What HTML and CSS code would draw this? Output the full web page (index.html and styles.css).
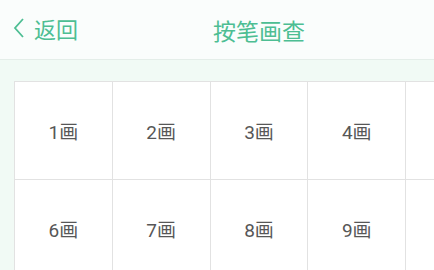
FILE: index.html
```html
<!DOCTYPE html>
<html lang="zh">
<head>
    <meta charset="UTF-8">
    <title>按笔画查</title>
    <link rel="stylesheet" href="styles.css">
</head>
<body>
    <div class="page">
        <header class="topbar">
            <a class="back" href="#">
                <svg class="chevron" width="12" height="20" viewBox="0 0 12 20">
                    <path d="M10 1 L2 10 L10 19" fill="none" stroke="#4dbe93" stroke-width="1.8"/>
                </svg>
                <span>返回</span>
            </a>
            <h1>按笔画查</h1>
        </header>

        <div class="content">
            <div class="grid">
                <div class="cell">1画</div>
                <div class="cell">2画</div>
                <div class="cell">3画</div>
                <div class="cell">4画</div>
                <div class="cell"></div>
                <div class="cell">6画</div>
                <div class="cell">7画</div>
                <div class="cell">8画</div>
                <div class="cell">9画</div>
                <div class="cell"></div>
            </div>
        </div>
    </div>
</body>
</html>
```

FILE: styles.css
```css
body {
    margin: 0;
    padding: 0;
    overflow: hidden;
    background-color: #f1faf5;
    font-family: Roboto, "Noto Sans CJK SC", sans-serif;
}
.page {
    width: 518px;
}
.topbar {
    position: relative;
    height: 59px;
    background-color: #fafdfc;
    border-bottom: 1px solid #e4eee9;
    display: flex;
    align-items: center;
    justify-content: center;
}
.topbar h1 {
    margin: 0;
    font-size: 23px;
    font-weight: normal;
    color: #4dbe93;
}
.back {
    position: absolute;
    left: 13px;
    top: 0;
    height: 56px;
    display: flex;
    align-items: center;
    gap: 9px;
    text-decoration: none;
    color: #4dbe93;
    font-size: 22px;
}
.content {
    padding: 21px 14px 0;
}
.grid {
    display: grid;
    grid-template-columns: repeat(5, 1fr);
    background-color: #fff;
    border-top: 1px solid #e2e2e2;
    border-left: 1px solid #e2e2e2;
}
.cell {
    height: 97px;
    display: flex;
    align-items: center;
    justify-content: center;
    border-right: 1px solid #e2e2e2;
    border-bottom: 1px solid #e2e2e2;
    font-size: 19px;
    color: #575757;
}
```
